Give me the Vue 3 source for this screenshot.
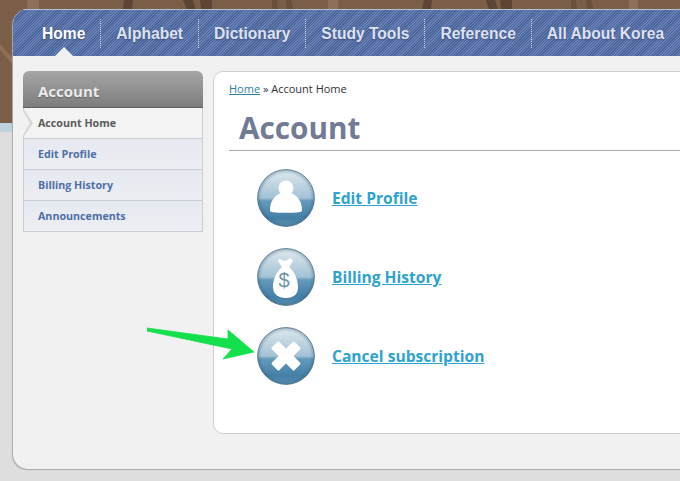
<script setup>
const navItems = [
  { label: 'Home', active: true },
  { label: 'Alphabet' },
  { label: 'Dictionary' },
  { label: 'Study Tools' },
  { label: 'Reference' },
  { label: 'All About Korea' }
]
const sideItems = [
  { label: 'Account Home', active: true },
  { label: 'Edit Profile' },
  { label: 'Billing History' },
  { label: 'Announcements' }
]
</script>

<template>
  <div class="page">
    <svg class="backdrop" viewBox="0 0 680 132">
      <rect width="680" height="123" fill="#7b5e47" />
      <rect y="123" width="680" height="9" fill="#bdd3de" />
      <g fill="#8e6f58">
        <rect x="27" y="0" width="12" height="10" />
        <rect x="328" y="0" width="10" height="10" />
        <rect x="629" y="0" width="9" height="10" />
        <path d="M0 44l14 15v7L0 50z" />
      </g>
      <g fill="#5e4433">
        <path d="M124 0h9l-1 10h-9z" />
        <path d="M183 0h10l3 10h-9z" />
        <path d="M200 0h12v10h-11z" />
        <path d="M424 0h8l-1 10h-9z" />
        <path d="M486 0h9l3 10h-9z" />
        <path d="M500 0h12v10h-11z" />
      </g>
      <g fill="#6a4f3b">
        <path d="M272 0h5l1 10h-6z" />
        <path d="M286 0h5l3 10h-7z" />
        <path d="M571 0h5l1 10h-6z" />
        <path d="M586 0h5l3 10h-7z" />
      </g>
    </svg>
    <div class="shell">
      <nav class="nav">
        <template v-for="(n, i) in navItems" :key="n.label">
          <span v-if="i" class="sep"></span>
          <a class="nav-item" :class="{ active: n.active }">{{ n.label }}</a>
        </template>
      </nav>
      <div class="body">
        <aside class="side">
          <h3 class="side-title">Account</h3>
          <a v-for="s in sideItems" :key="s.label" class="side-item" :class="{ active: s.active }">{{ s.label }}</a>
        </aside>
        <main class="panel">
          <div class="crumb"><a class="crumb-link">Home</a> » Account Home</div>
          <h1 class="title">Account</h1>
          <ul class="list">
            <li class="row">
              <svg class="orb" viewBox="0 0 58 58">
                <defs>
                  <linearGradient id="g" x1="0" y1="0" x2="0" y2="1">
                    <stop offset="0" stop-color="#dfe9ee" /><stop offset=".5" stop-color="#a3c2d5" />
                    <stop offset=".55" stop-color="#6499bb" /><stop offset=".85" stop-color="#437fa6" /><stop offset="1" stop-color="#5a91b3" />
                  </linearGradient>
                  <radialGradient id="rim" cx=".5" cy=".5" r=".5">
                    <stop offset=".85" stop-color="#2f5d7c" stop-opacity="0" /><stop offset="1" stop-color="#2f5d7c" stop-opacity=".35" />
                  </radialGradient>
                </defs>
                <circle cx="29" cy="29" r="28.4" fill="url(#g)" />
                <circle cx="29" cy="29" r="28.4" fill="url(#rim)" stroke="#4a6d85" stroke-width=".8" />
                <circle cx="29" cy="19" r="7.500" fill="#fff" />
                <path d="M13 41c0-9 5-15 11-17 3 1.500 7 1.500 10 0 6 2 11 8 11 17 0 1.500-1 2-3 2.200-8 .8-18 .8-26 0-2-.2-3-.7-3-2.200z" fill="#fff" />
              </svg>
              <a class="link">Edit Profile</a>
            </li>
            <li class="row">
              <svg class="orb" viewBox="0 0 58 58">
                <circle cx="29" cy="29" r="28.4" fill="url(#g)" />
                <circle cx="29" cy="29" r="28.4" fill="url(#rim)" stroke="#4a6d85" stroke-width=".8" />
                <path d="M22 11l6 2 6-3 2 3-4 6c5 4 9 12 9 20 0 7-4 11-12 11s-13-4-13-11c0-8 4-16 9-20l-4-6z" fill="#fff" />
                <text x="27" y="39" class="dollar">$</text>
              </svg>
              <a class="link">Billing History</a>
            </li>
            <li class="row">
              <svg class="orb" viewBox="0 0 58 58">
                <circle cx="29" cy="29" r="28.4" fill="url(#g)" />
                <circle cx="29" cy="29" r="28.4" fill="url(#rim)" stroke="#4a6d85" stroke-width=".8" />
                <rect x="13" y="23.800" width="32" height="10.500" rx="1.500" fill="#fff" transform="rotate(45 29 29)" />
                <rect x="13" y="23.800" width="32" height="10.500" rx="1.500" fill="#fff" transform="rotate(-45 29 29)" />
              </svg>
              <a class="link">Cancel subscription</a>
            </li>
          </ul>
        </main>
      </div>
    </div>
    <svg class="arrow" viewBox="0 0 112 40">
      <path d="M0 1L81 12 81 3 107 25 76 32 85 22 0 4z" fill="#14e04c" stroke="#14e04c" stroke-width=".8" stroke-linejoin="round" />
    </svg>
  </div>
</template>

<style scoped>
.page { position: relative; width: 680px; height: 481px; overflow: hidden; background: #dedede; font-family: "Open Sans", "DejaVu Sans", sans-serif; }
.backdrop { position: absolute; left: 0; top: 0; width: 680px; height: 132px; display: block; }
.shell { position: absolute; left: 13px; top: 9px; width: 720px; height: 460px; border-radius: 15px; background: #f1f1f1; box-shadow: -1px 1px 1px #a9a9a9; overflow: hidden; }
.nav { height: 47px; display: flex; align-items: flex-start; padding-left: 14px; box-sizing: border-box; border-top: 1px solid #b4c1dc;
  background: repeating-linear-gradient(135deg, #6780b8 0 1px, #4c6599 1px 2px); }
.nav-item { position: relative; display: block; padding: 0 15px; margin-top: 14px; font: bold 15.600px/20px "Liberation Sans", sans-serif; color: #dde2f2; text-shadow: 0 1px 2px #3c4f7c; white-space: nowrap; }
.nav-item.active { color: #fff; }
.nav-item.active::after { content: ""; position: absolute; left: 50%; margin-left: -12px; top: 23px; border: 12px solid transparent; border-top: 0; border-bottom-color: #f1f1f1; }
.sep { width: 0; height: 29px; margin-top: 9px; border-left: 1px dotted #c9d3ea; }
.body { display: flex; align-items: flex-start; padding: 15px 0 0 10px; gap: 10px; }
.side { width: 180px; flex: none; }
.side-title { margin: 0; height: 37px; box-sizing: border-box; padding: 11px 15px 0; border-radius: 6px 6px 0 0; background: linear-gradient(#a6a6a6, #7d7d7d); border-bottom: 1px solid #5f5f5f; font: bold 15px/18px "Open Sans", sans-serif; color: #ececec; text-shadow: 0 1px 1px #666; }
.side-item { position: relative; display: block; height: 31px; box-sizing: border-box; padding: 0 14px; border: 1px solid #c9ced6; border-top: 0; background: linear-gradient(#e6e9f0, #eceef3); font: bold 10.700px/30px "Open Sans", sans-serif; color: #4f6fa8; }
.side-item.active { color: #5a5a5a; background: #f3f3f3; }
.side-item.active::before { content: ""; position: absolute; left: -1px; top: 0; border: 15px solid transparent; border-right: 0; border-left: 10px solid #d6d6d6; }
.side-item.active::after { content: ""; position: absolute; left: -1px; top: 3px; border: 12px solid transparent; border-right: 0; border-left: 7px solid #f1f1f1; }
.panel { width: 500px; height: 363px; flex: none; background: #fff; border: 1px solid #cfcfcf; border-radius: 10px; padding: 10px 15px 0; box-sizing: border-box; }
.crumb { font: 11px/14px "Open Sans", sans-serif; color: #333; }
.crumb-link { color: #2f7f9f; text-decoration: underline; }
.title { margin: 12px 0 0; padding: 0 10px; height: 43px; box-sizing: border-box; border-bottom: 1px solid #a9a9b0; font: bold 29.700px/40px "Open Sans", sans-serif; color: #717b96; }
.list { list-style: none; margin: 18px 0 0; padding: 0 0 0 28px; display: flex; flex-direction: column; gap: 21px; }
.row { display: flex; align-items: center; gap: 17px; height: 58px; }
.orb { width: 58px; height: 58px; flex: none; }
.dollar { font: 20px "Liberation Sans", sans-serif; fill: #6b94ab; text-anchor: middle; }
.link { font: bold 15.600px/18px "Open Sans", sans-serif; color: #2fa3cf; text-decoration: underline; }
.arrow { position: absolute; left: 147px; top: 327px; width: 112px; height: 40px; }
</style>
